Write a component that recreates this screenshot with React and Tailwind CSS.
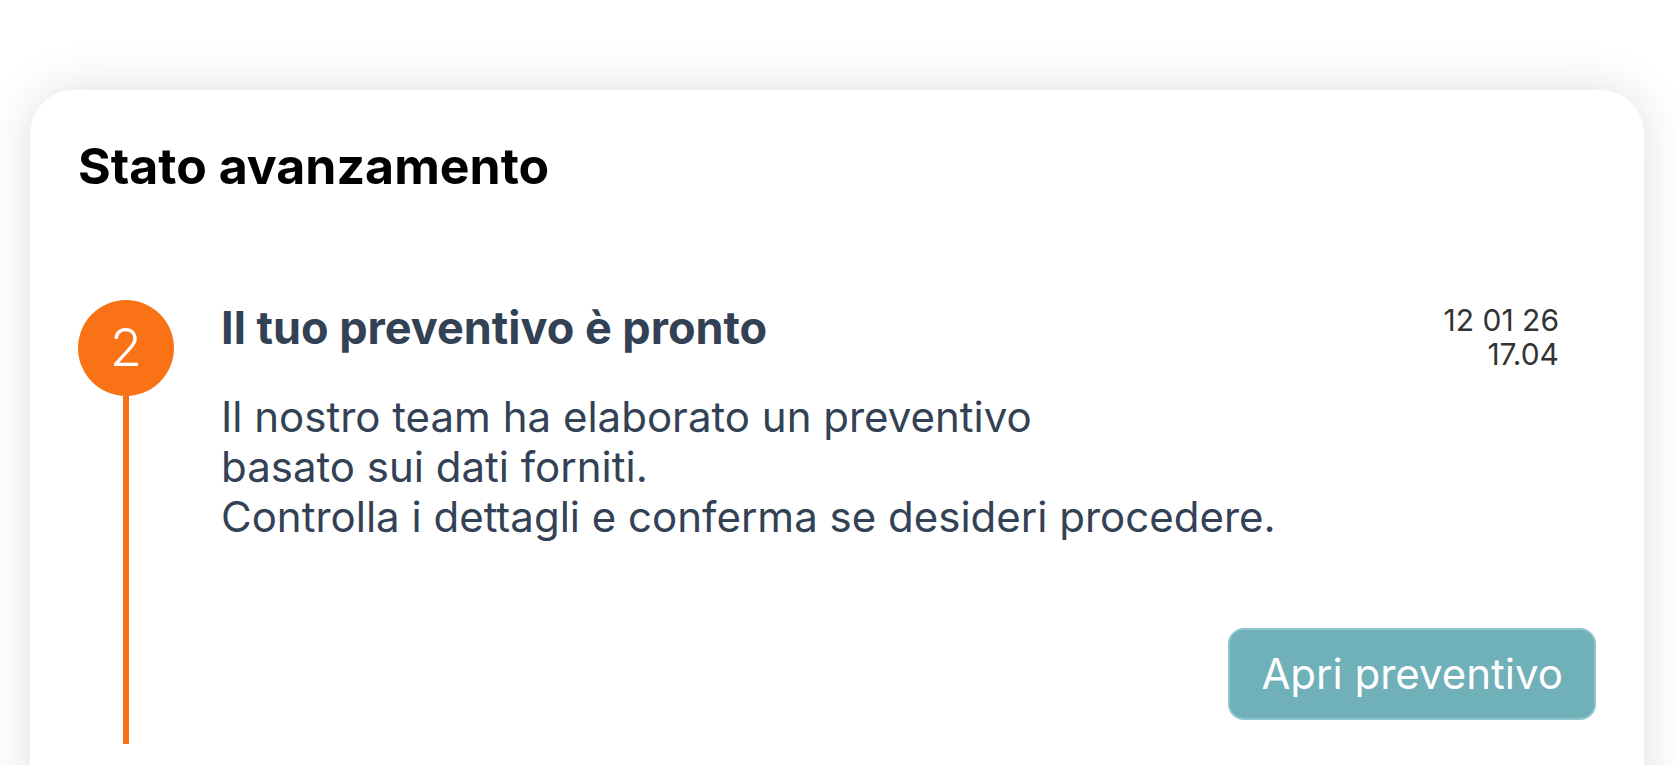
export default function App() {
  return (
    <div className="h-screen overflow-hidden bg-white px-[30px] pt-[90px]" style={{ fontFamily: 'Inter, "Noto Sans", sans-serif' }}>
      <div className="min-h-[900px] rounded-[44px] bg-white pl-[48px] pr-[48px] pt-[51px] shadow-[0_0_50px_rgba(0,0,0,0.13)]">
        <h1 className="text-[50px] font-bold leading-none text-black">Stato avanzamento</h1>

        <div className="mt-[109px] flex gap-[47px]">
          {/* step marker */}
          <div className="flex w-24 shrink-0 flex-col items-center">
            <div className="flex h-24 w-24 items-center justify-center rounded-full bg-[#f97316] text-[52px] font-light leading-none text-white">
              2
            </div>
            <div className="w-[6px] flex-1 bg-[#f97316]" />
          </div>

          <div className="flex-1 pb-[24px]">
            <div className="flex items-start justify-between">
              <h2 className="mt-[5px] text-[45px] font-bold leading-none text-[#334155]">
                Il tuo preventivo è pronto
              </h2>
              <div className="mr-[37px] mt-[3px] text-right text-[30px] leading-[34px] text-[#333333]">
                12 01 26
                <br />
                17.04
              </div>
            </div>

            <p className="mt-[21px] text-[42px] leading-[50px] text-[#334155]">
              Il nostro team ha elaborato un preventivo
              <br />
              basato sui dati forniti.
              <br />
              Controlla i dettagli e conferma se desideri procedere.
            </p>

            <div className="mt-[86px] flex justify-end">
              <button className="rounded-[16px] border-2 border-[#8dc5cc] bg-[#6fb0b9] px-[31px] py-[23px] text-[42px] leading-none text-white">
                Apri preventivo
              </button>
            </div>
          </div>
        </div>
      </div>
    </div>
  );
}
